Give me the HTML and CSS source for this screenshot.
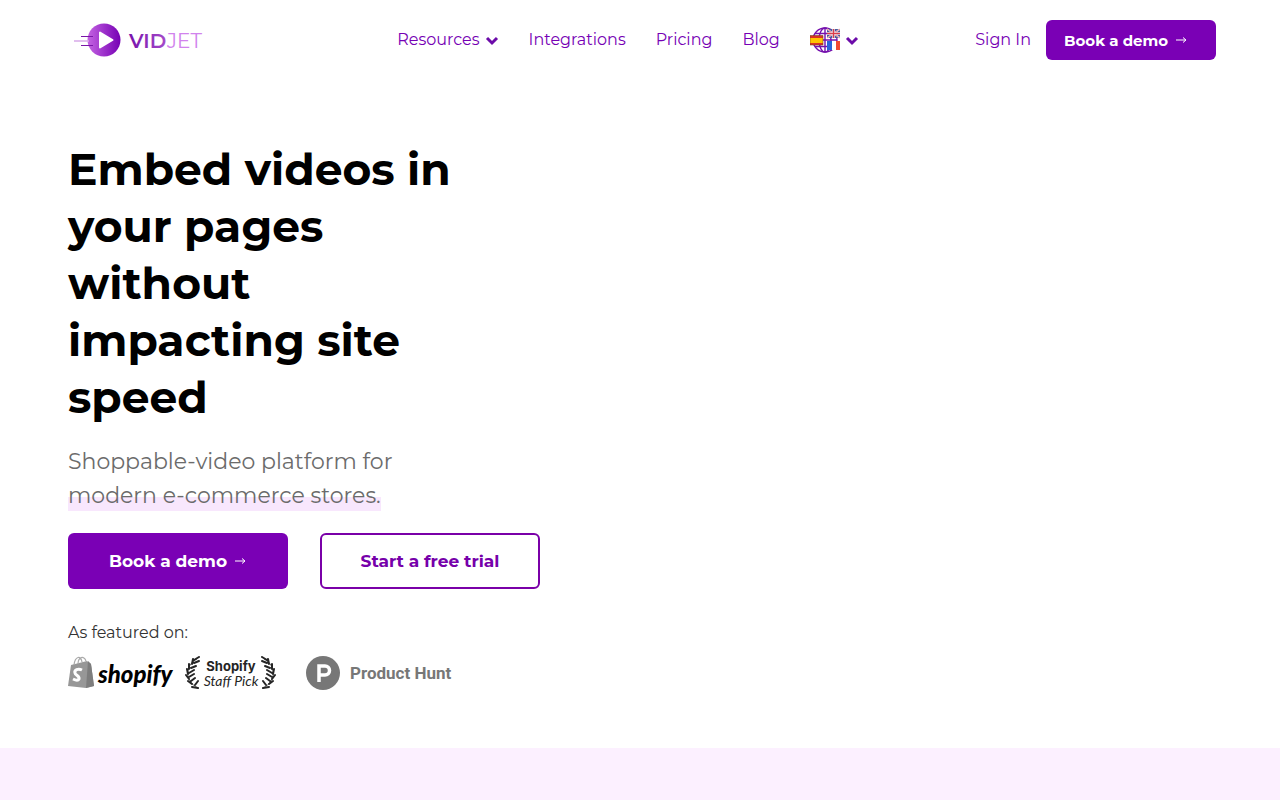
FILE: index.html
```html
<!DOCTYPE html>
<html lang="en">
<head>
<meta charset="utf-8">
<meta name="viewport" content="width=device-width, initial-scale=1">
<title>Vidjet</title>
<link rel="stylesheet" href="styles.css">
</head>
<body>
<header class="header">
  <a class="brand" href="#" aria-label="Vidjet home">
    <svg width="144" height="40" viewBox="0 0 144 40">
      <defs>
        <linearGradient id="disc" x1="0" y1="0" x2="1" y2="0"><stop offset="0" stop-color="#c463e2"/><stop offset="1" stop-color="#7600b4"/></linearGradient>
        <linearGradient id="word" x1="0" y1="0" x2="1" y2="0"><stop offset="0" stop-color="#7612ab"/><stop offset="1" stop-color="#a54aca"/></linearGradient>
      </defs>
      <circle cx="40" cy="20" r="16.500" fill="url(#disc)"/>
      <path d="M36 12.500v15L48.500 20z" fill="#fff" stroke="#fff" stroke-width="2" stroke-linejoin="round"/>
      <path d="M17 16.500h12M17 25.500h12" stroke="#7a16a8" stroke-width="1"/>
      <path d="M10 21h15" stroke="#d7a8e8" stroke-width="1.500"/>
      <text class="word-bold" x="65" y="28" fill="url(#word)">VID</text>
      <text class="word-light" x="103" y="28">JET</text>
    </svg>
  </a>
  <nav class="nav">
    <button class="nav-item" type="button">Resources
      <svg class="chevron" viewBox="0 0 14 16"><path d="M2 6l5 5 5-5"/></svg>
    </button>
    <a class="nav-item" href="#">Integrations</a>
    <a class="nav-item" href="#">Pricing</a>
    <a class="nav-item" href="#">Blog</a>
    <button class="nav-item" type="button" aria-label="Language">
      <svg width="30" height="26" viewBox="0 0 30 26">
        <g fill="none" stroke="#7411ad" stroke-width="1.400">
          <circle cx="15" cy="13" r="12"/><ellipse cx="15" cy="13" rx="6" ry="12"/>
          <path d="M15 1v24M3 13h24M5 6.500h20M5 19.500h20"/>
        </g>
        <path d="M0 8.500h13v9.500H0z" fill="#d93025"/><path d="M0 11h13v5H0z" fill="#ffc400"/>
        <path d="M0 8.500h13v9.500H0z" fill="none" stroke="#78461e" stroke-width=".6"/>
        <path d="M17 2h13v9H17z" fill="#485a9c"/>
        <path d="M17 2l13 9M30 2l-13 9" stroke="#fff" stroke-width="1.500"/>
        <path d="M17 2l13 9M30 2l-13 9" stroke="#d93c4a" stroke-width=".6"/>
        <path d="M23.500 2v9M17 6.500h13" stroke="#fff" stroke-width="2.400"/>
        <path d="M23.500 2v9M17 6.500h13" stroke="#d93c4a" stroke-width="1.400"/>
        <path d="M17 14h5v9h-5z" fill="#2864da"/><path d="M22 14h4v9h-4z" fill="#fff"/><path d="M26 14h4v9h-4z" fill="#f04a32"/>
      </svg>
      <svg class="chevron" viewBox="0 0 14 16"><path d="M2 6l5 5 5-5"/></svg>
    </button>
  </nav>
  <div class="actions">
    <a class="nav-item" href="#">Sign In</a>
    <a class="btn btn-small" href="#">Book a demo <svg class="arrow" viewBox="0 0 12 10"><path d="M0 5h9.500M7 2.500L10 5 7 7.500"/></svg></a>
  </div>
</header>
<main>
  <section class="hero">
    <h1 class="title">Embed videos in your pages without impacting site speed</h1>
    <p class="subtitle">Shoppable-video platform for <span class="marked">modern e-commerce stores.</span></p>
    <div class="cta">
      <a class="btn" href="#">Book a demo <svg class="arrow" viewBox="0 0 12 10"><path d="M0 5h9.500M7 2.500L10 5 7 7.500"/></svg></a>
      <a class="btn btn-outline" href="#">Start a free trial</a>
    </div>
    <p class="featured">As featured on:</p>
    <div class="logos">
      <svg width="208" height="34" viewBox="0 0 208 34" role="img" aria-label="Shopify Staff Pick">
        <defs>
          <g id="branch">
            <path d="M12 3C0 9-1 25 13 32" fill="none" stroke="#252525" stroke-width=".7"/>
            <path d="M14 1L9 4M8 3L7 8M4 8l0 5M2 13l1 5M1 19l3 4M3 25l4 3M7 31l6 1M14 5l-5 2M11 10l-5 2M9 14l-5 3M9 18l-5 3M10 22l-4 3M13 25l-3 4" stroke="#252525" stroke-width="2" stroke-linecap="round"/>
          </g>
        </defs>
        <path d="M3 9l16-4 4 3 3 22-8 2L0 30z" fill="#979797"/>
        <path d="M20 5l3 3 3 22-8 2z" fill="#7d7d7d"/>
        <path d="M6 9C7 0 13-1 14 6M10 8c0-7 6-9 8-3" fill="none" stroke="#aaa" stroke-width="1.200"/>
        <path d="M14 14c-4-2-8 0-7 3 0 2 5 3 4 6-1 2-4 1-6 0" fill="none" stroke="#fff" stroke-width="3"/>
        <text class="shop-word" x="30" y="27">shopify</text>
        <use href="#branch" x="117"/>
        <use href="#branch" transform="translate(208) scale(-1 1)"/>
        <text class="pick-bold" x="163" y="15" text-anchor="middle">Shopify</text>
        <text class="pick-light" x="163" y="30" text-anchor="middle">Staff Pick</text>
      </svg>
      <svg width="148" height="34" viewBox="0 0 148 34" role="img" aria-label="Product Hunt">
        <circle cx="17" cy="17" r="17" fill="#777"/>
        <path d="M13 26V10h6a4.500 4.500 0 010 9h-6" fill="none" stroke="#fff" stroke-width="3.500"/>
        <text class="hunt-word" x="44" y="23">Product Hunt</text>
      </svg>
    </div>
  </section>
  <section class="band"></section>
</main>
</body>
</html>
```
FILE: styles.css
```css
* { box-sizing: border-box; }
body {
  margin: 0;
  min-height: 100vh;
  display: flex;
  flex-direction: column;
  background: #fff;
  color: #333;
  font-family: Montserrat, Inter, "Open Sans", sans-serif;
}
main { flex: 1; display: flex; flex-direction: column; }
a { text-decoration: none; }
svg { flex: none; }
.header {
  display: grid;
  grid-template-columns: 1fr auto 1fr;
  align-items: center;
  padding: 20px 64px;
}
.brand { display: flex; }
.word-bold { font-size: 20px; font-weight: 600; }
.word-light { font-size: 20px; font-weight: 400; fill: #d183ed; }
.nav { display: flex; align-items: center; gap: 30px; padding-right: 24px; }
.nav-item {
  display: flex;
  align-items: center;
  gap: 5px;
  padding: 0;
  border: 0;
  background: none;
  color: #7600b4;
  font: inherit;
  font-size: 16px;
  font-weight: 400;
  line-height: 26px;
  cursor: pointer;
}
.chevron { width: 14px; height: 16px; fill: none; stroke: #6c0ba9; stroke-width: 3; }
.actions { display: flex; align-items: center; justify-content: flex-end; gap: 15px; }
.btn {
  display: flex;
  align-items: center;
  justify-content: center;
  gap: 8px;
  width: 220px;
  height: 56px;
  border-radius: 6px;
  background: #7a00b5;
  color: #fff;
  font-size: 17px;
  font-weight: 700;
}
.arrow { width: 12px; height: 10px; fill: none; stroke: currentColor; stroke-width: 1; }
.btn-small {
  justify-content: flex-start;
  width: 170px;
  height: 40px;
  padding-left: 18px;
  font-size: 15px;
}
.btn-outline { border: 2px solid #7a00a8; background: #fff; color: #7600aa; }
.hero { padding: 61px 68px 58px; }
.title {
  max-width: 400px;
  margin: 0 0 19px;
  color: #000;
  font-size: 44px;
  font-weight: 700;
  line-height: 57px;
}
.subtitle {
  max-width: 360px;
  margin: 0 0 20px;
  color: #6b6b6b;
  font-size: 22px;
  font-weight: 400;
  line-height: 34px;
}
.marked {
  padding-bottom: 2px;
  background: linear-gradient(transparent 50%, #f8e7fd 50%);
}
.cta { display: flex; flex-wrap: wrap; gap: 32px; }
.featured { margin: 32px 0 11px; font-size: 16px; line-height: 24px; }
.logos { display: flex; align-items: center; gap: 30px; }
.shop-word { font: italic 900 24px Lato, sans-serif; fill: #000; }
.pick-bold { font: 700 13px Inter, sans-serif; fill: #252525; }
.pick-light { font: italic 400 14px Lato, sans-serif; fill: #252525; }
.hunt-word { font: 700 17px Roboto, sans-serif; fill: #777; }
.band { flex: 1; min-height: 52px; background: #fcf0ff; }
```
